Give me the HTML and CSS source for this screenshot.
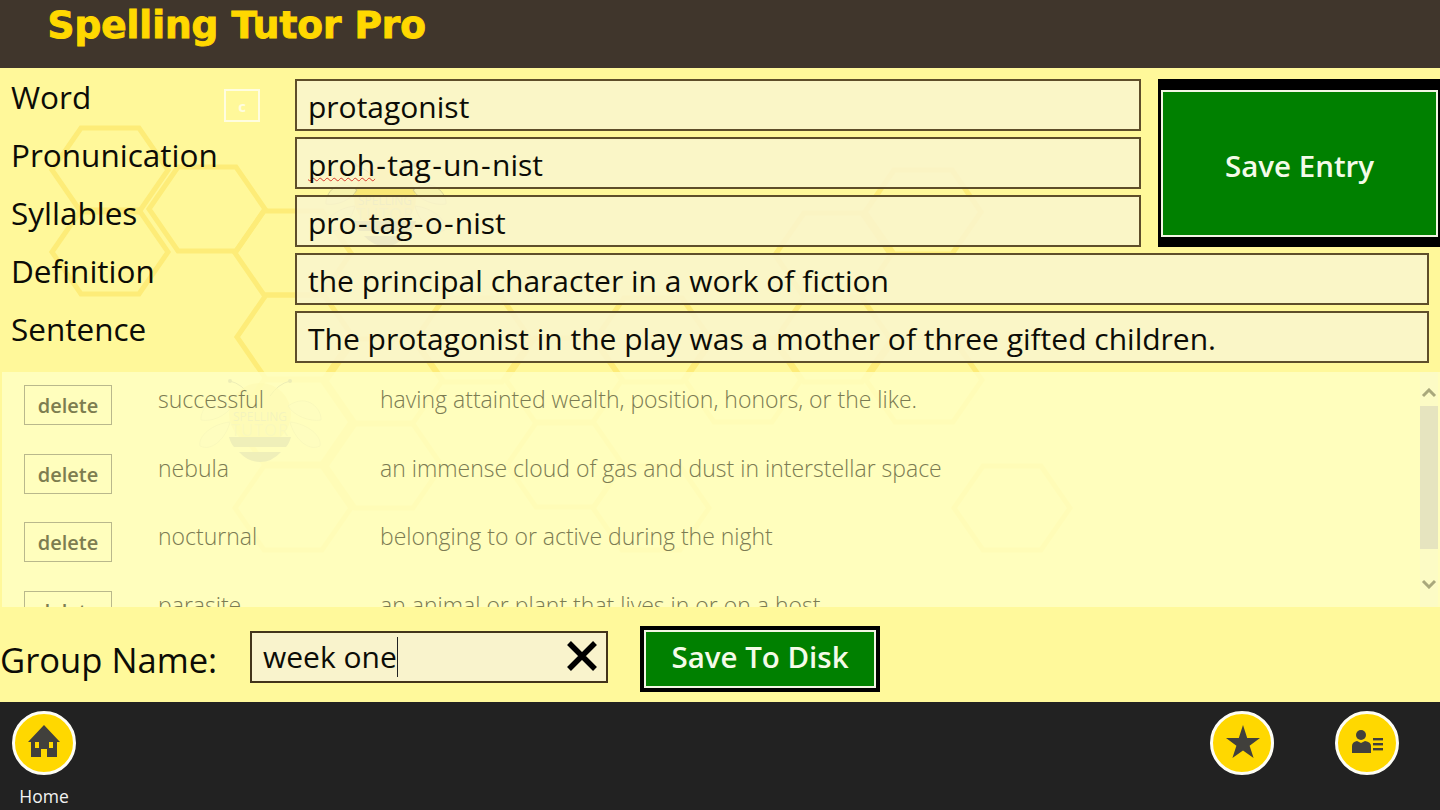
FILE: index.html
```html
<!DOCTYPE html>
<html lang="en">
<head>
<meta charset="utf-8">
<title>Spelling Tutor Pro</title>
<link rel="stylesheet" href="styles.css">
</head>
<body>
<header class="topbar"><h1 class="title">Spelling Tutor Pro</h1></header>
<main class="stage">
  <svg class="honeycomb" width="1440" height="539" viewBox="0 68 1440 539" aria-hidden="true">
    <defs>
      <polygon id="hex" points="-58,0 -29,-42 29,-42 58,0 29,42 -29,42"/>
      <g id="bee">
        <path class="bee-ant" d="M52 20 Q44 8 32 5 M72 20 Q80 8 92 5"/>
        <circle class="bee-tip" cx="32" cy="5" r="2"/><circle class="bee-tip" cx="92" cy="5" r="2"/>
        <circle class="bee-body" cx="62" cy="38" r="31"/>
        <path class="bee-wing" d="M34 30 C14 16 2 34 3 44 C14 46 28 40 34 30Z M90 30 C110 16 124 34 123 44 C112 46 96 40 90 30Z M32 46 C14 48 0 60 2 70 C14 76 28 62 32 46Z M92 46 C110 48 124 60 122 70 C110 76 96 62 92 46Z"/>
        <path class="bee-stripe" d="M31 61 H93 Q91 68 88 71 H36 Q33 68 31 61Z M41 76 H83 Q74 86 62 86 Q50 86 41 76Z"/>
        <text class="bee-t1" x="62" y="45" text-anchor="middle">SPELLING</text>
        <text class="bee-t2" x="62" y="60" text-anchor="middle">TUTOR</text>
      </g>
    </defs>
    <g class="hexes">
      <use href="#hex" x="110" y="170"/><use href="#hex" x="110" y="252"/><use href="#hex" x="207" y="209"/>
      <use href="#hex" x="293" y="253"/><use href="#hex" x="295" y="337"/><use href="#hex" x="293" y="422"/><use href="#hex" x="293" y="508"/>
      <use href="#hex" x="384" y="381"/><use href="#hex" x="384" y="466"/><use href="#hex" x="473" y="340"/>
      <use href="#hex" x="564" y="380"/><use href="#hex" x="565" y="465"/><use href="#hex" x="653" y="340"/><use href="#hex" x="651" y="508"/>
      <use href="#hex" x="743" y="380"/><use href="#hex" x="833" y="255"/><use href="#hex" x="833" y="340"/>
      <use href="#hex" x="923" y="212"/><use href="#hex" x="924" y="380"/><use href="#hex" x="1012" y="508"/>
    </g>
    <use href="#bee" x="198" y="376"/>
    <use href="#bee" x="323" y="160"/>
  </svg>

  <section class="form">
    <div class="label label-word"><span>Word</span><button class="mini" type="button">c</button></div>
    <div class="field field-short">protagonist</div>
    <button class="save-entry" type="button">Save Entry</button>
    <div class="label">Pronunication</div>
    <div class="field field-short"><span class="spell">proh</span><span class="hy">-</span>tag<span class="hy">-</span>un<span class="hy">-</span>nist</div>
    <div class="label">Syllables</div>
    <div class="field field-short">pro<span class="hy">-</span>tag<span class="hy">-</span>o<span class="hy">-</span>nist</div>
    <div class="label">Definition</div>
    <div class="field field-wide">the principal character in a work of fiction</div>
    <div class="label">Sentence</div>
    <div class="field field-wide">The protagonist in the play was a mother of three gifted children.</div>
  </section>

  <section class="list">
    <div class="rows">
      <div class="row"><button class="del" type="button">delete</button><span class="w">successful</span><span class="d">having attainted wealth, position, honors, or the like.</span></div>
      <div class="row"><button class="del" type="button">delete</button><span class="w">nebula</span><span class="d">an immense cloud of gas and dust in interstellar space</span></div>
      <div class="row"><button class="del" type="button">delete</button><span class="w">nocturnal</span><span class="d">belonging to or active during the night</span></div>
      <div class="row"><button class="del" type="button">delete</button><span class="w">parasite</span><span class="d">an animal or plant that lives in or on a host</span></div>
    </div>
    <div class="scrollbar">
      <svg class="arrow" width="16" height="10" viewBox="0 0 16 10"><path d="M2 8 L8 2 L14 8"/></svg>
      <div class="thumb"></div>
      <svg class="arrow" width="16" height="10" viewBox="0 0 16 10"><path d="M2 2 L8 8 L14 2"/></svg>
    </div>
  </section>

  <section class="group">
    <div class="group-label">Group Name:</div>
    <div class="group-input">
      <span class="caret-text">week one</span>
      <svg class="clear" width="34" height="32" viewBox="0 0 34 32"><path d="M4 3 L30 29 M30 3 L4 29"/></svg>
    </div>
    <button class="save-disk" type="button">Save To Disk</button>
  </section>
</main>
<footer class="appbar">
  <div class="app-btn">
    <svg class="circle" width="64" height="64" viewBox="0 0 64 64">
      <circle class="disc" cx="32" cy="32" r="30.5"/>
      <path class="glyph" d="M32 14 L48 31 H45 V46 H35 V38 H29 V46 H19 V31 H16Z"/>
      <rect class="win" x="23" y="31" width="4" height="6"/><rect class="win" x="37" y="31" width="4" height="6"/>
    </svg>
    <span class="app-label">Home</span>
  </div>
  <div class="app-btn app-right">
    <svg class="circle" width="64" height="64" viewBox="0 0 64 64">
      <circle class="disc" cx="32" cy="32" r="30.5"/>
      <polygon class="glyph" points="33,14 37.2,27 50,27 39.6,34.8 43.6,47 33,39.4 22.4,47 26.4,34.8 16,27 28.8,27"/>
    </svg>
  </div>
  <div class="app-btn">
    <svg class="circle" width="64" height="64" viewBox="0 0 64 64">
      <circle class="disc" cx="32" cy="32" r="30.5"/>
      <circle class="glyph" cx="26" cy="24" r="5"/>
      <path class="glyph" d="M17 42 V35 Q17 31 22 30 L26 32 L30 30 Q36 31 36 35 V42Z"/>
      <rect class="glyph" x="38" y="27" width="10" height="2.4"/><rect class="glyph" x="38" y="32" width="10" height="2.4"/><rect class="glyph" x="38" y="37" width="10" height="2.4"/>
    </svg>
  </div>
</footer>
</body>
</html>
```
FILE: styles.css
```css
* { box-sizing: border-box; }
html, body { margin: 0; height: 100%; }
body {
  width: 1440px; height: 810px; overflow: hidden;
  display: flex; flex-direction: column;
  font-family: "Open Sans", "Noto Sans", sans-serif;
  color: #0c0c06; background: #fff89a;
}
.topbar { height: 68px; flex: none; background: #40362c; padding-left: 47.5px; }
.title {
  margin: 0; font: bold 37.4px/50px "DejaVu Sans", sans-serif; color: #ffd800;
  -webkit-text-stroke: 1px #ffd800;
}
.stage { position: relative; flex: 1; display: flex; flex-direction: column; background: #fff89a; min-height: 0; }
.honeycomb { position: absolute; left: 0; top: 0; }
.hexes use { fill: none; stroke: #fdec78; stroke-width: 5; }
.bee-ant { fill: none; stroke: #8f8f70; stroke-width: 1; }
.bee-tip { fill: #8f8f70; }
.bee-body { fill: #f4dc5c; opacity: .6; }
.bee-wing { fill: #f5f0b0; stroke: #c8c490; stroke-width: 1; opacity: .7; }
.bee-stripe { fill: #9a9a80; }
.bee-t1 { font: 12px "Open Sans", sans-serif; fill: #b4b49c; }
.bee-t2 { font: 16.5px "Open Sans", sans-serif; letter-spacing: 1px; fill: #d8d498; }

.form {
  position: relative; flex: none;
  display: grid;
  grid-template-columns: 295px 846px 17px 271px 11px;
  grid-auto-rows: 52px; row-gap: 6px;
  padding-top: 11px; height: 304px;
}
.label { grid-column: 1; font-size: 31.5px; line-height: 36px; padding-left: 11px; }
.label-word { display: flex; justify-content: space-between; padding-right: 35px; }
.mini {
  width: 36px; height: 33px; margin-top: 10px; padding: 0;
  border: 2px solid #fffde0; background: transparent; color: #fffde0;
  font: bold 15px "Open Sans", sans-serif;
}
.field {
  background: rgba(249, 245, 205, .88);
  border: 2px solid #5e4e2a;
  font-size: 30px; line-height: 52px; padding: 0 11px; white-space: nowrap; overflow: hidden;
}
.field-short { grid-column: 2; }
.field-wide { grid-column: 2 / span 3; }
.hy { padding: 0 1.25px; }
.spell { text-decoration: underline wavy #d8392b 1px; text-underline-offset: 1px; text-decoration-skip-ink: none; }
.save-entry {
  grid-column: 4 / span 2; grid-row: 1 / span 3;
  background: #008000; color: #f4fbe8;
  border: solid #000; border-width: 11px 2px 10px 3px;
  box-shadow: inset 0 0 0 2px #f2f6e4;
  font: 600 29.5px "Open Sans", sans-serif; padding: 3px 0 0;
}
.list {
  position: relative; flex: none; height: 235px; margin-left: 2px;
  background: rgba(255, 255, 195, .84);
  display: flex; overflow: hidden;
}
.rows { flex: 1; padding: 13px 0 0 22px; color: #7b7b52; }
.row { display: flex; height: 68.5px; align-items: flex-start; }
.del {
  flex: none; width: 88px; height: 40px; padding: 1px 0 0;
  background: transparent; border: 1px solid #b9b88c; color: #7d7d50;
  font: 600 20px "Open Sans", sans-serif;
}
.w, .d { font-size: 23px; font-weight: 300; line-height: 28px; white-space: nowrap; }
.w { width: 222px; margin-left: 46px; }
.scrollbar {
  flex: none; width: 18px; margin-right: 2px;
  background: rgba(250, 248, 205, .5);
  display: flex; flex-direction: column; align-items: center;
}
.arrow { margin: 16px 0 8px; }
.arrow path { fill: none; stroke: #a9a87c; stroke-width: 3; }
.thumb { width: 18px; height: 143px; background: #e6e4bf; }
.thumb + .arrow { margin: 30px 0 0; }

.group {
  position: relative; flex: 1; background: #fff99b;
  display: flex; align-items: flex-start; padding-top: 19px;
}
.group-label { width: 250px; flex: none; padding: 11px 0 0; font-size: 34.6px; line-height: 46px; }
.group-input {
  width: 358px; height: 52px; margin-top: 5px; flex: none;
  display: flex; align-items: center; justify-content: space-between;
  background: #f9f3cc; border: 2px solid #43341a;
  padding: 0 7px 0 11px;
  font-size: 30px;
}
.caret-text { border-right: 1px solid #222; line-height: 40px; }
.clear { margin-bottom: 3px; }
.clear path { fill: none; stroke: #000; stroke-width: 5.5; }
.save-disk {
  width: 240px; height: 66px; margin-left: 32px; flex: none; padding: 0 0 5px;
  background: #008000; color: #f4fbe8;
  border: 4px solid #000; box-shadow: inset 0 0 0 2px #f2f6e4;
  font: 600 29.5px "Open Sans", sans-serif;
}
.appbar {
  height: 108px; flex: none; background: #222;
  display: flex; gap: 61px; padding: 9px 41px 0 12px;
}
.app-btn { width: 64px; display: flex; flex-direction: column; align-items: center; }
.app-right { margin-left: auto; }
.disc { fill: #ffd800; stroke: #fdfdf5; stroke-width: 3; }
.glyph { fill: #41403c; }
.win { fill: #ffd800; }
.app-label { color: #f2f2f2; font-size: 17.5px; line-height: 24px; margin-top: 9px; }
```
